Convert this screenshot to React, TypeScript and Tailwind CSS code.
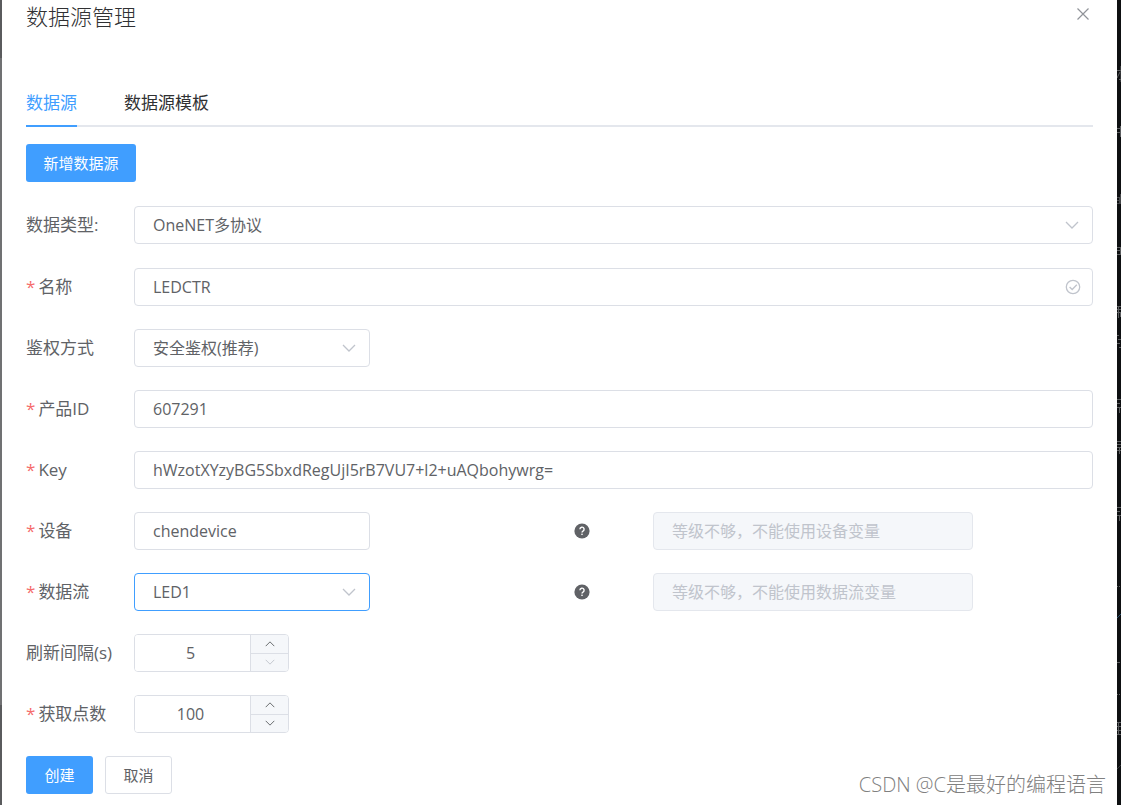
import React, { useState } from 'react';

interface FieldRowProps {
    id: string;
    label: string;
    required?: boolean;
    children: React.ReactNode;
}

interface SelectBoxProps {
    id: string;
    value: string;
    active?: boolean;
    className: string;
}

interface StepperProps {
    id: string;
    min: number;
    initial: number;
}

// Shared look of every white text field
const fieldClass =
    "h-[38px] rounded border bg-white px-[18px] text-[#606266] outline-none focus:border-[#409eff]";

const Chevron: React.FC<{ className: string; up?: boolean }> = ({ className, up }) => (
    <svg viewBox="0 0 14 8" fill="none" stroke="currentColor" className={className} aria-hidden="true">
        <path d={up ? "M1 7 L7 1 L13 7" : "M1 1 L7 7 L13 1"} strokeWidth="1.3" />
    </svg>
);

const FieldRow: React.FC<FieldRowProps> = ({ id, label, required, children }) => (
    <div className="flex items-center">
        <label htmlFor={id} className="w-[108px] shrink-0 text-[17px] leading-6 whitespace-nowrap text-[#606266]">
            {required && <span className="mr-[3px] text-[#f56c6c]">*</span>}
            {label}
        </label>
        {children}
    </div>
);

const SelectBox: React.FC<SelectBoxProps> = ({ id, value, active, className }) => (
    <div className={`relative ${className}`}>
        <select
            id={id}
            className={`${fieldClass} w-full appearance-none text-base ${active ? "border-[#409eff]" : "border-[#dcdfe6]"}`}
        >
            <option>{value}</option>
        </select>
        <Chevron className="pointer-events-none absolute top-[15px] right-[14px] h-2 w-[14px] text-[#c0c4cc]" />
    </div>
);

const Stepper: React.FC<StepperProps> = ({ id, min, initial }) => {
    const [value, setValue] = useState(initial);

    return (
        <div className="flex h-[38px] w-[155px] overflow-hidden rounded border border-[#dcdfe6]">
            <input
                id={id}
                value={value}
                onChange={(e) => setValue(Number(e.target.value) || min)}
                className="min-w-0 flex-1 bg-white pr-1 text-center text-base text-[#606266] outline-none"
            />
            <div className="flex w-[38px] flex-col border-l border-[#dcdfe6] bg-[#f5f7fa] text-[#606266]">
                <button
                    type="button"
                    aria-label="+"
                    onClick={() => setValue(value + 1)}
                    className="flex flex-1 items-center justify-center border-b border-[#dcdfe6]"
                >
                    <Chevron up className="h-[6px] w-[10px]" />
                </button>
                <button
                    type="button"
                    aria-label="-"
                    disabled={value <= min}
                    onClick={() => setValue(value - 1)}
                    className="flex flex-1 items-center justify-center disabled:text-[#c0c4cc]"
                >
                    <Chevron className="h-[6px] w-[10px]" />
                </button>
            </div>
        </div>
    );
};

// Help mark plus the locked variable field on the right half of a row
const LockedVariable: React.FC<{ text: string }> = ({ text }) => (
    <>
        <svg viewBox="0 0 16 16" className="ml-[204px] h-4 w-4 shrink-0" aria-hidden="true">
            <circle cx="8" cy="8" r="7.6" fill="#606266" />
            <path d="M5.9 6.3a2.1 2.1 0 1 1 3.1 1.8c-.7.4-1 .7-1 1.4" fill="none" stroke="#fff" strokeWidth="1.4" />
            <rect x="7.3" y="10.6" width="1.4" height="1.4" fill="#fff" />
        </svg>
        <input
            disabled
            aria-label={text}
            placeholder={text}
            className="ml-[63px] h-[38px] w-[320px] rounded border border-[#e4e7ed] bg-[#f5f7fa] px-[18px] text-base placeholder:text-[#c0c4cc]"
        />
    </>
);

// Sliver of the dark page still visible right of the dialog
const PageEdge: React.FC = () => (
    <svg width="4" height="805" fill="none" stroke="#5c5e60" className="shrink-0 self-start" aria-hidden="true">
        <path d="M0 70.5 H4 M4 66 V82 M3 72 L0 78 M2 79.5 H4" />
        <path d="M0 128.5 H3 M0 132.5 H3 M3.5 126 V137" />
        <path d="M0 197.5 H2 M0 200.5 H2 M0 203.5 H2 M2.5 197 V204 M3.5 194 V204" stroke="#45474a" />
        <path d="M0 247.5 H3 M0 250.5 H3 M0 254.5 H3 M3.5 247 V255" />
        <path d="M0 306.5 H4 M0 309.5 H4 M1.5 306 V318 M0 312.5 H4 M3.5 312 V317" />
        <path d="M0 335.5 H2 M1 339.5 H4 M0 343.5 H3 M2 347.5 H4" />
        <path d="M0 399.5 H4 M0 403.5 H3 M0 407.5 H4 M2.5 407 V413" />
        <path d="M0 441.5 H4 M0 444.5 H4 M0 447.5 H4 M0 450.5 H4 M2.5 447 V454" />
        <path d="M0 507.5 H4 M0 511.5 H3 M0 515.5 H4 M2.5 515 V521" />
        <path d="M0 586.5 H1 M2 586.5 H3 M0 662.5 H3 M0 694.5 H1 M2 694.5 H3" />
        <path d="M0 618 L4 614" stroke="#27506e" />
        <path d="M0 722.5 H4 M0 726.5 H4 M0 730.5 H4 M0 734.5 H4 M1.5 722 V735" />
        <path d="M0 769 L4 765" stroke="#34383b" />
    </svg>
);

const App: React.FC = () => {
    return (
        <div className="flex min-h-screen bg-[#0e1012] font-['Open_Sans','Noto_Sans_CJK_SC',sans-serif]">
            {/* Dimmed page left of the dialog */}
            <div className="flex w-[2px] shrink-0 flex-col bg-[#707173]">
                <div className="h-[58px] bg-[#5a5b5d]" />
                <div className="mt-auto h-[100px] bg-[#5a5b5d]" />
            </div>

            <main className="relative min-w-0 flex-1 bg-white pr-6 pb-[11px] pl-6">
                <header className="flex items-start justify-between">
                    <h1 className="text-[22px] leading-8 font-light text-[#303133]">数据源管理</h1>
                    <button type="button" aria-label="关闭" className="mt-2 mr-1 text-[#909399]">
                        <svg viewBox="0 0 12 12" className="h-3 w-3" stroke="currentColor" strokeWidth="1.2">
                            <path d="M0.5 0.5 L11.5 11.5 M11.5 0.5 L0.5 11.5" />
                        </svg>
                    </button>
                </header>

                <nav className="mt-12 flex gap-[47px] border-b-2 border-[#e4e7ed] text-[17px] leading-[45px]">
                    <a href="#source" className="-mb-[2px] border-b-2 border-[#409eff] text-[#409eff]">数据源</a>
                    <a href="#template" className="text-[#303133]">数据源模板</a>
                </nav>

                <button type="button" className="mt-[17px] block h-[38px] w-[110px] rounded-[3px] bg-[#409eff] text-[15px] leading-5 text-white">
                    新增数据源
                </button>

                <form className="mt-6 flex flex-col gap-[23px]" onSubmit={(e) => e.preventDefault()}>
                    <div className="mb-px">
                        <FieldRow id="type" label="数据类型:">
                            <SelectBox id="type" value="OneNET多协议" className="flex-1" />
                        </FieldRow>
                    </div>

                    <FieldRow id="name" label="名称" required>
                        <div className="relative flex-1">
                            <input id="name" defaultValue="LEDCTR" className={`${fieldClass} w-full border-[#dcdfe6]`} />
                            <svg viewBox="0 0 16 16" fill="none" stroke="#c0c4cc" strokeWidth="1.3" className="absolute top-[11px] right-3 h-4 w-4" aria-hidden="true">
                                <circle cx="8" cy="8" r="6.7" />
                                <path d="M4.6 8 L7.2 10.5 L11.8 5.8" />
                            </svg>
                        </div>
                    </FieldRow>

                    <FieldRow id="auth" label="鉴权方式">
                        <SelectBox id="auth" value="安全鉴权(推荐)" className="w-[236px]" />
                    </FieldRow>

                    <FieldRow id="product" label="产品ID" required>
                        <input id="product" defaultValue="607291" className={`${fieldClass} flex-1 border-[#dcdfe6]`} />
                    </FieldRow>

                    <FieldRow id="key" label="Key" required>
                        <input id="key" defaultValue="hWzotXYzyBG5SbxdRegUjI5rB7VU7+l2+uAQbohywrg=" className={`${fieldClass} flex-1 border-[#dcdfe6]`} />
                    </FieldRow>

                    <FieldRow id="device" label="设备" required>
                        <input id="device" defaultValue="chendevice" className={`${fieldClass} w-[236px] border-[#dcdfe6]`} />
                        <LockedVariable text="等级不够，不能使用设备变量" />
                    </FieldRow>

                    <FieldRow id="stream" label="数据流" required>
                        <SelectBox id="stream" value="LED1" active className="w-[236px]" />
                        <LockedVariable text="等级不够，不能使用数据流变量" />
                    </FieldRow>

                    <FieldRow id="interval" label="刷新间隔(s)">
                        <Stepper id="interval" min={5} initial={5} />
                    </FieldRow>

                    <FieldRow id="points" label="获取点数" required>
                        <Stepper id="points" min={1} initial={100} />
                    </FieldRow>

                    <div className="flex gap-3 text-[15px] leading-5">
                        <button type="submit" className="h-[38px] w-[67px] rounded-[3px] bg-[#409eff] text-white">创建</button>
                        <button type="button" className="h-[38px] w-[67px] rounded-[3px] border border-[#dcdfe6] bg-white text-[#606266]">取消</button>
                    </div>
                </form>

                <p className="absolute right-[11px] bottom-1 text-xl leading-8 font-light whitespace-nowrap text-[#808080]">
                    CSDN @C是最好的编程语言
                </p>
            </main>

            <PageEdge />
        </div>
    );
};

export default App;
